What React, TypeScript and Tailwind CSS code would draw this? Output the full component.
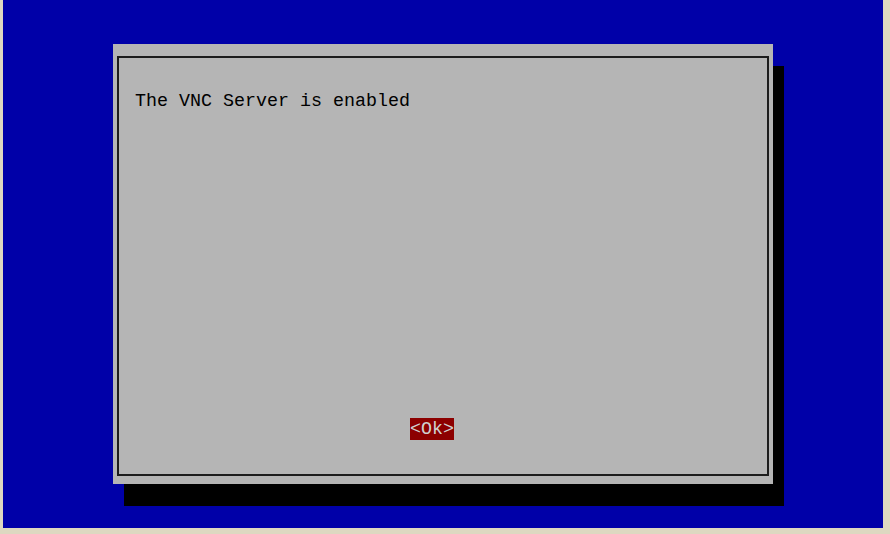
export default function App() {
  return (
    <div className="w-[890px] h-[534px] bg-[#ddd8c1] overflow-hidden">
      <div className="ml-[3px] w-[880px] h-[528px] bg-[#0000a8] pt-[44px] pl-[110px]">
        <Dialog
          message="The VNC Server is enabled"
          buttonLabel="<Ok>"
        />
      </div>
    </div>
  )
}

function Dialog(_props: { message: string; buttonLabel: string }) {
  return (
    <div className="w-[660px] h-[440px] bg-[#b5b5b5] shadow-[11px_22px_0_0_#000] pt-[12px] pl-[4px]">
      <div className="w-[652px] h-[420px] border-2 border-[#1c1c1c] pl-[16px] pt-[33px] font-['Liberation_Mono',monospace] text-[18.33px] leading-[22px]">
        <p className="text-black h-[22px] whitespace-pre">{_props.message}</p>
        <button className="block mt-[305px] ml-[275px] h-[22px] px-0 pt-[2px] leading-[20px] bg-[#8c0000] text-[#d0d0d0] whitespace-pre">
          {_props.buttonLabel}
        </button>
      </div>
    </div>
  )
}
